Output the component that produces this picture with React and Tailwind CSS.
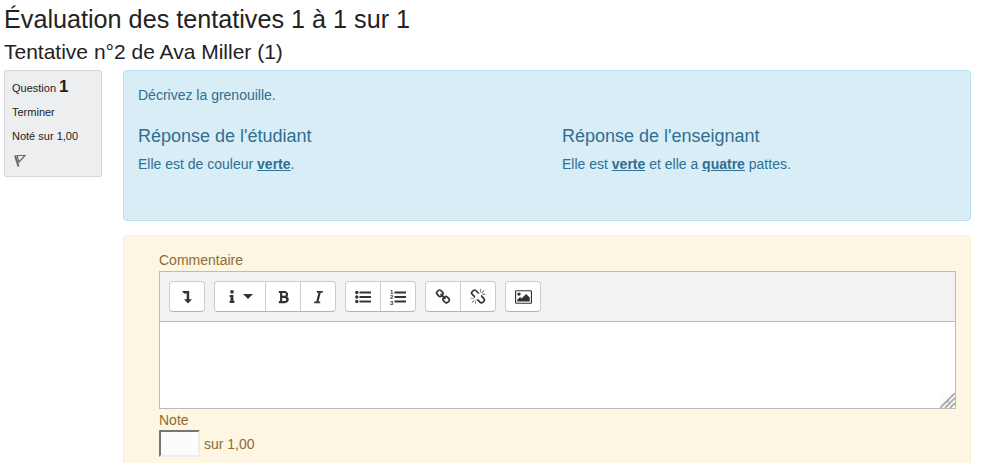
import React from "react";
import { FaBold, FaItalic, FaInfo } from "react-icons/fa";

function Glyph({ d, viewBox = "0 0 1792 1792", className = "h-4 w-4" }) {
  return (
    <svg viewBox={viewBox} className={className} fill="currentColor">
      <path d={d} />
    </svg>
  );
}

const LINK =
  "M1520 1216q0-40-28-68l-208-208q-28-28-68-28-42 0-72 32 3 3 19 18.500t21.500 21.500 15 19 13 25.500 3.500 27.500q0 40-28 68t-68 28q-15 0-27.500-3.500t-25.500-13-19-15-21.500-21.500-18.500-19q-33 31-33 73 0 40 28 68l206 207q27 27 68 27 40 0 68-26l147-146q28-28 28-67zm-703-705q0-40-28-68l-206-207q-28-28-68-28-39 0-68 27l-147 146q-28 28-28 67 0 40 28 68l208 208q27 27 68 27 42 0 72-31-3-3-19-18.500t-21.500-21.500-15-19-13-25.500-3.500-27.500q0-40 28-68t68-28q15 0 27.500 3.500t25.500 13 19 15 21.500 21.500 18.500 19q33-31 33-73zm895 705q0 120-85 203l-147 146q-83 83-203 83-121 0-204-85l-206-207q-83-83-83-203 0-123 88-209l-88-88q-86 88-208 88-120 0-204-84l-208-208q-84-84-84-204t85-203l147-146q83-83 203-83 121 0 204 85l206 207q83 83 83 203 0 123-88 209l88 88q86-88 208-88 120 0 204 84l208 208q84 84 84 204z";
const UNLINK =
  "M503 1271l-256 256q-10 9-23 9-12 0-23-9-9-10-9-23t9-23l256-256q10-9 23-9t23 9q9 10 9 23t-9 23zm169 41v320q0 14-9 23t-23 9-23-9-9-23v-320q0-14 9-23t23-9 23 9 9 23zm-224-224q0 14-9 23t-23 9h-320q-14 0-23-9t-9-23 9-23 23-9h320q14 0 23 9t9 23zm1264 128q0 120-85 203l-147 146q-83 83-203 83-121 0-204-85l-334-335q-21-21-42-56l239-18 273 274q28 28 68 27.500t68-27.500l147-146q28-28 28-67 0-40-28-68l-274-275 18-239q35 21 56 42l336 336q84 86 84 204zm-617-724l-239 18-273-274q-28-28-68-28-39 0-68 27l-147 146q-28 28-28 67 0 40 28 68l274 274-18 240q-35-21-56-42l-336-336q-84-86-84-204 0-120 85-203l147-146q83-83 203-83 121 0 204 85l334 335q21 21 42 56zm633 84q0 14-9 23t-23 9h-320q-14 0-23-9t-9-23 9-23 23-9h320q14 0 23 9t9 23zm-544-544v320q0 14-9 23t-23 9-23-9-9-23v-320q0-14 9-23t23-9 23 9 9 23zm407 151l-256 256q-11 9-23 9t-23-9q-9-10-9-23t9-23l256-256q10-9 23-9t23 9q9 10 9 23t-9 23z";
const IMAGE =
  "M576 576q0 80-56 136t-136 56-136-56-56-136 56-136 136-56 136 56 56 136zm1024 384v448h-1408v-192l320-320 160 160 512-512zm96-704h-1600q-13 0-22.500 9.500t-9.500 22.500v1216q0 13 9.500 22.500t22.500 9.500h1600q13 0 22.500-9.500t9.500-22.500v-1216q0-13-9.500-22.500t-22.500-9.500zm160 32v1216q0 66-47 113t-113 47h-1600q-66 0-113-47t-47-113v-1216q0-66 47-113t113-47h1600q66 0 113 47t47 113z";

function ListIcon({ numbered }) {
  return (
    <svg viewBox="0 0 16 16" className="h-4 w-4" fill="currentColor">
      {numbered ? (
        <g fontFamily="Liberation Sans, sans-serif" fontSize="6" fontWeight="bold">
          <text x="0" y="4.500">1</text>
          <text x="0" y="10">2</text>
          <text x="0" y="15.500">3</text>
        </g>
      ) : (
        <>
          <circle cx="1.800" cy="3.500" r="1.700" />
          <circle cx="1.800" cy="8" r="1.700" />
          <circle cx="1.800" cy="12.500" r="1.700" />
        </>
      )}
      <rect x="4.500" y="2.500" width="11.500" height="2" />
      <rect x="4.500" y="7" width="11.500" height="2" />
      <rect x="4.500" y="11.500" width="11.500" height="2" />
    </svg>
  );
}

function Group({ children }) {
  return (
    <div className="flex h-[31px] divide-x divide-[#ccc] rounded-[4px] border border-[#ccc] border-b-[#b3b3b3] bg-white text-[#333]">
      {children}
    </div>
  );
}

function Tool({ children, label, className = "w-[34px]" }) {
  return (
    <button aria-label={label} className={`flex items-center justify-center box-content ${className}`}>
      {children}
    </button>
  );
}

function Toolbar() {
  return (
    <div className="flex h-[50px] gap-[9px] border-b border-[#bbb] bg-[#f2f2f2] pt-[9px] pl-[9px]">
      <Group>
        <Tool label="Afficher plus de boutons">
          <svg viewBox="0 0 10 14" className="h-[14px] w-[10px]" fill="currentColor">
            <path d="M0 1h7.200v8.200H10L6 13.500 2 9.200h2.700V3.500H2z" />
          </svg>
        </Tool>
      </Group>
      <Group>
        <Tool label="Styles de paragraphe" className="w-[50px] gap-[7px]">
          <FaInfo className="h-[13px] w-[8px]" />
          <svg viewBox="0 0 10 5" className="h-[5px] w-[10px]" fill="currentColor">
            <path d="M0 0h10L5 5z" />
          </svg>
        </Tool>
        <Tool label="Gras"><FaBold className="h-[14px] w-[13px]" /></Tool>
        <Tool label="Italique"><FaItalic className="h-[14px] w-[9px]" /></Tool>
      </Group>
      <Group>
        <Tool label="Liste à puces"><ListIcon /></Tool>
        <Tool label="Liste numérotée"><ListIcon numbered /></Tool>
      </Group>
      <Group>
        <Tool label="Lien"><Glyph d={LINK} /></Tool>
        <Tool label="Supprimer le lien"><Glyph d={UNLINK} /></Tool>
      </Group>
      <Group>
        <Tool label="Image">
          <Glyph d={IMAGE} viewBox="-64 0 1920 1792" className="h-4 w-[17px]" />
        </Tool>
      </Group>
    </div>
  );
}

export default function App() {
  return (
    <div className="h-[463px] overflow-hidden bg-white pl-1 font-['Liberation_Sans',Arial,sans-serif] text-[14px] leading-5 text-[#222]">
      <h1 className="pt-1 text-[25.200px] leading-[30px]">Évaluation des tentatives 1 à 1 sur 1</h1>
      <h2 className="pt-1 text-[21px] leading-7">Tentative n°2 de Ava Miller (1)</h2>
      <div className="mt-1 flex items-start gap-[21px]">
        <aside className="h-[107px] w-[98px] rounded-[2px] border border-[#d5d8da] bg-[#edeeef] px-[7px] pt-[6px] text-[11px]">
          <div className="leading-5">Question <b className="text-[17px]">1</b></div>
          <div className="pt-[4px] leading-5">Terminer</div>
          <div className="pt-[4px] leading-5">Noté sur 1,00</div>
          <svg viewBox="0 0 14 14" className="mt-[8px] ml-[1px] h-[14px] w-[14px]" fill="none" stroke="#666">
            <path d="M2 1.500l3.500 11" strokeWidth="2" />
            <path d="M4 1.500h8L6 8z" strokeWidth="1.200" />
          </svg>
        </aside>
        <main className="w-[848px]">
          <section className="h-[151px] rounded-[4px] border border-[#bce0ee] bg-[#d9edf7] px-[14px] pt-[14px] text-[#2f6f91]">
            <p>Décrivez la grenouille.</p>
            <div className="grid grid-cols-[424px_1fr] pt-[19px]">
              <div>
                <h3 className="text-[18px] leading-6">Réponse de l'étudiant</h3>
                <p className="pt-[6px]">Elle est de couleur <b className="underline">verte</b>.</p>
              </div>
              <div>
                <h3 className="text-[18px] leading-6">Réponse de l'enseignant</h3>
                <p className="pt-[6px]">Elle est <b className="underline">verte</b> et elle a <b className="underline">quatre</b> pattes.</p>
              </div>
            </div>
          </section>
          <section className="mt-[14px] h-[260px] rounded-[4px] border border-[#fbeed5] bg-[#fcf6e3] pt-[14px] pl-[35px] text-[#8f6b35]">
            <div>Commentaire</div>
            <div className="mt-px h-[138px] w-[797px] border border-[#bbb] bg-white">
              <Toolbar />
              <div className="flex h-[86px] items-end justify-end">
                <svg viewBox="0 0 15 15" className="h-[15px] w-[15px]" stroke="#aaa" strokeWidth="1.800">
                  <rect width="15" height="15" fill="#fafafa" stroke="none" />
                  <path d="M0 15L15 0M5 15L15 5M10 15l5-5" />
                  <path d="M4 10l5-5v4z" fill="#aaa" stroke="none" />
                </svg>
              </div>
            </div>
            <div className="pt-px">Note</div>
            <div className="flex items-center gap-1">
              <input aria-label="Note" className="h-[27px] w-[41px] border-2 border-t-[#767676] border-r-[#ededed] border-b-[#ededed] border-l-[#767676] bg-[#fcfcfc]" />
              <span>sur 1,00</span>
            </div>
          </section>
        </main>
      </div>
    </div>
  );
}
